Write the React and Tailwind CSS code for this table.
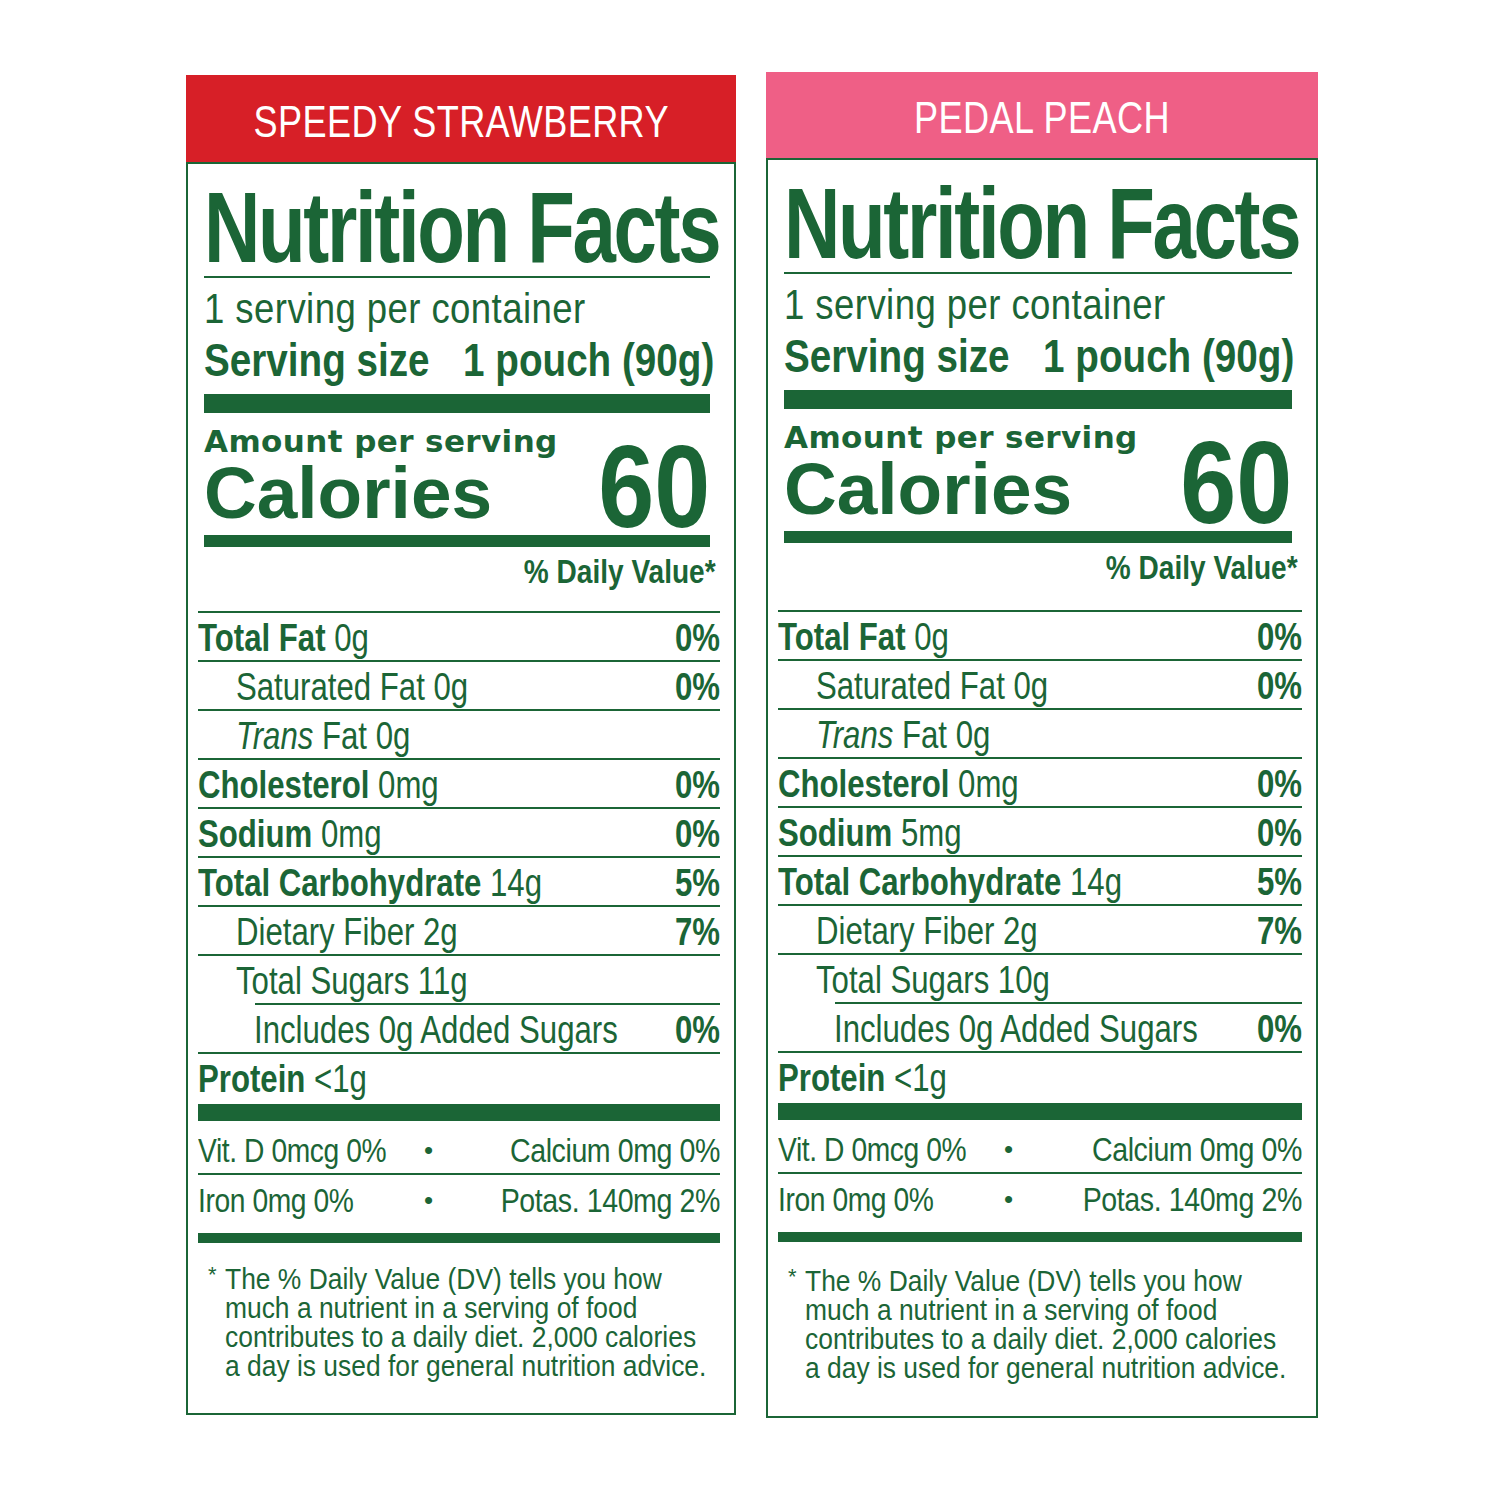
const sans = "font-['Liberation_Sans',Arial,sans-serif]";
const wide = "font-['DejaVu_Sans','Liberation_Sans',sans-serif]";

// Arial squeezed sideways stands in for Helvetica Condensed
function Sq({ cls, children }) {
  return <span className={`inline-block whitespace-nowrap ${cls}`}>{children}</span>;
}

function Row({ row }) {
  return (
    <div>
      <div className={`h-[2px] bg-[#1b6536] ${row.lineCls || ""}`} />
      <div className={`${sans} flex h-[47px] pt-[3px] text-[38px] leading-[44px] ${row.indentCls || ""}`}>
        <div className="min-w-0 flex-1 whitespace-nowrap">
          <Sq cls="origin-left scale-x-[0.82]">
            {row.bold && <span className="font-bold">{row.bold} </span>}
            {row.italic && <span className="italic">{row.italic} </span>}
            {row.text}
          </Sq>
        </div>
        {row.pct && (
          <Sq cls="origin-right scale-x-[0.82] font-bold">{row.pct}</Sq>
        )}
      </div>
    </div>
  );
}

function Panel({ title, headerCls, widthCls, dvGapCls, footCls, sodium, sugars }) {
  const rows = [
    { bold: "Total Fat", text: "0g", pct: "0%" },
    { text: "Saturated Fat 0g", pct: "0%", indentCls: "pl-[38px]" },
    { italic: "Trans", text: "Fat 0g", indentCls: "pl-[38px]" },
    { bold: "Cholesterol", text: "0mg", pct: "0%" },
    { bold: "Sodium", text: sodium, pct: "0%" },
    { bold: "Total Carbohydrate", text: "14g", pct: "5%" },
    { text: "Dietary Fiber 2g", pct: "7%", indentCls: "pl-[38px]" },
    { text: `Total Sugars ${sugars}`, indentCls: "pl-[38px]" },
    { text: "Includes 0g Added Sugars", pct: "0%", indentCls: "pl-[56px]", lineCls: "ml-[57px]" },
    { bold: "Protein", text: "<1g" },
  ];

  return (
    <div className={widthCls}>
      {/* flavour header */}
      <div className={`flex items-center justify-center pt-[6px] text-white ${headerCls}`}>
        <Sq cls={`${sans} scale-x-[0.82] text-[44px] leading-[44px] tracking-[0.5px]`}>{title}</Sq>
      </div>

      <div className="border-2 border-[#1b6536] text-[#1b6536]">
        {/* top block */}
        <div className={`${sans} pl-[16px] pr-[24px] pt-[14px]`}>
          <div className="h-[98px] whitespace-nowrap text-[100px] font-bold leading-[98px] tracking-[-3px]">
            <Sq cls="origin-left scale-x-[0.78]">Nutrition Facts</Sq>
          </div>
          <div className="h-[2px] bg-[#1b6536]" />
          <div className="mt-[8px] whitespace-nowrap text-[43px] leading-[44px] tracking-[0.5px]">
            <Sq cls="origin-left scale-x-[0.85]">1 serving per container</Sq>
          </div>
          <div className="mt-[7px] whitespace-nowrap text-[46px] font-bold leading-[46px]">
            <Sq cls="origin-left scale-x-[0.84]">
              Serving size<span className="ml-[40px]">1 pouch (90g)</span>
            </Sq>
          </div>
          <div className="mt-[11px] h-[19px] bg-[#1b6536]" />
          <div className="mt-[12px] flex justify-between">
            <div>
              <div className={`${wide} whitespace-nowrap text-[31px] font-bold leading-[32px] tracking-[0.4px]`}>
                Amount per serving
              </div>
              <div className="text-[73px] font-bold leading-[72px]">Calories</div>
            </div>
            <div className="self-end text-[117px] font-bold leading-[85px]">
              <Sq cls="origin-right scale-x-[0.86]">60</Sq>
            </div>
          </div>
          <div className="mt-[6px] h-[12px] bg-[#1b6536]" />
          <div className="-mr-[6px] mt-[8px] text-right text-[33px] font-bold leading-[34px]">
            <Sq cls="origin-right scale-x-[0.85]">% Daily Value*</Sq>
          </div>
        </div>

        {/* nutrient rows */}
        <div className={`pl-[10px] pr-[14px] ${dvGapCls}`}>
          {rows.map((r, i) => (
            <Row key={i} row={r} />
          ))}
          <div className="mt-[3px] h-[17px] bg-[#1b6536]" />

          <div className={`${sans} flex h-[52px] whitespace-nowrap pt-[9px] text-[34px] leading-[40px] tracking-[-0.5px]`}>
            <div className="w-[226px] flex-none">
              <Sq cls="origin-left scale-x-[0.83]">Vit. D 0mcg 0%</Sq>
            </div>
            <span className="text-[26px]">•</span>
            <div className="flex-1 text-right">
              <Sq cls="origin-right scale-x-[0.84]">Calcium 0mg 0%</Sq>
            </div>
          </div>
          <div className="h-[2px] bg-[#1b6536]" />
          <div className={`${sans} flex h-[58px] whitespace-nowrap pt-[5px] text-[34px] leading-[40px] tracking-[-0.5px]`}>
            <div className="w-[226px] flex-none">
              <Sq cls="origin-left scale-x-[0.83]">Iron 0mg 0%</Sq>
            </div>
            <span className="text-[26px]">•</span>
            <div className="flex-1 text-right">
              <Sq cls="origin-right scale-x-[0.84]">Potas. 140mg 2%</Sq>
            </div>
          </div>
          <div className="h-[10px] bg-[#1b6536]" />

          {/* footnote */}
          <div className={`${sans} flex pl-[10px] text-[30px] leading-[29px] ${footCls}`}>
            <span className="w-[17px] flex-none text-[22px] leading-[22px]">*</span>
            <div>
              <Sq cls="origin-left scale-x-[0.88]">
                The % Daily Value (DV) tells you how
                <br />
                much a nutrient in a serving of food
                <br />
                contributes to a daily diet. 2,000 calories
                <br />a day is used for general nutrition advice.
              </Sq>
            </div>
          </div>
        </div>
      </div>
    </div>
  );
}

export default function App() {
  return (
    <div className="flex h-[1500px] w-[1500px] items-start gap-[30px] bg-white pl-[186px] pt-[72px]">
      <div className="mt-[3px]">
        <Panel
          title="SPEEDY STRAWBERRY"
          widthCls="w-[550px]"
          headerCls="h-[87px] bg-[#d71f27]"
          dvGapCls="mt-[22px]"
          footCls="mt-[21px] pb-[33px]"
          sodium="0mg"
          sugars="11g"
        />
      </div>
      <Panel
        title="PEDAL PEACH"
        widthCls="w-[552px]"
        headerCls="h-[86px] bg-[#ef5f86]"
        dvGapCls="mt-[25px]"
        footCls="mt-[24px] pb-[34px]"
        sodium="5mg"
        sugars="10g"
      />
    </div>
  );
}
